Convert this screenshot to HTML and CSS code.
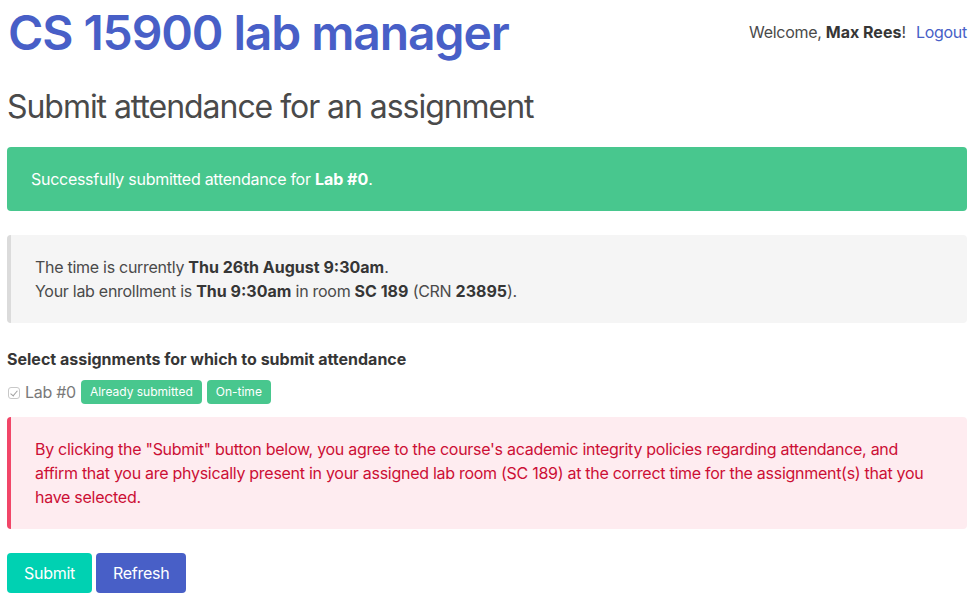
FILE: index.html
```html
<!DOCTYPE html>
<html lang="en">
  <head>
    <meta charset="UTF-8" />
    <meta name="viewport" content="width=device-width, initial-scale=1.0" />
    <title>CS 15900 lab manager</title>
    <link rel="stylesheet" href="styles.css">
  </head>
  <body>
    <div class="page">
      <header class="top">
        <h1 class="title"><a href="#">CS 15900 lab manager</a></h1>
        <div class="welcome">
          Welcome, <strong>Max Rees</strong>!
          <a href="#" class="logout">Logout</a>
        </div>
      </header>
      <h2 class="subtitle">Submit attendance for an assignment</h2>

      <div class="notification is-success">
        Successfully submitted attendance for <strong>Lab #0</strong>.
      </div>

      <div class="message">
        <div class="message-body">
          The time is currently <strong>Thu 26th August 9:30am</strong>.<br />
          Your lab enrollment is <strong>Thu 9:30am</strong> in room
          <strong>SC 189</strong> (CRN <strong>23895</strong>).
        </div>
      </div>

      <form action="#" method="post">
        <div class="field">
          <label class="label">Select assignments for which to submit attendance</label>
          <div class="assignment">
            <label class="checkbox" disabled>
              <input type="checkbox" checked disabled />
              Lab #0
            </label>
            <span class="tag">Already submitted</span>
            <span class="tag">On-time</span>
          </div>
        </div>

        <div class="message is-danger">
          <div class="message-body">
            By clicking the "Submit" button below, you agree to the course's
            academic integrity policies regarding attendance, and affirm that
            you are physically present in your assigned lab room (SC 189) at
            the correct time for the assignment(s) that you have selected.
          </div>
        </div>

        <div class="buttons">
          <button type="submit" class="button is-primary">Submit</button>
          <button type="button" class="button is-link">Refresh</button>
        </div>
      </form>
    </div>
  </body>
</html>
```

FILE: styles.css
```css
body {
  margin: 0;
  font-family: 'Inter', 'Liberation Sans', sans-serif;
  font-size: 16px;
  line-height: 1.5;
  letter-spacing: -0.28px;
  color: #4a4a4a;
  background: #fff;
}
.page {
  padding: 6px 10px 0 7px;
}
a {
  color: #485fc7;
  text-decoration: none;
}
strong {
  color: #363636;
  font-weight: 700;
  letter-spacing: 0;
}
/* header */
.top {
  display: flex;
  justify-content: space-between;
  align-items: flex-start;
}
.title {
  margin: 0;
  padding-left: 1px;
  font-size: 48px;
  font-weight: 600;
  line-height: 1.125;
  letter-spacing: -1.1px;
}
.welcome {
  padding-top: 14px;
  font-size: 16px;
}
.logout {
  margin-left: 6px;
}
.subtitle {
  margin: 27px 0 20px;
  font-size: 32px;
  font-weight: 400;
  line-height: 1.25;
  letter-spacing: -1.05px;
  color: #4a4a4a;
}
/* notification */
.notification {
  padding: 20px 40px 20px 24px;
  margin-bottom: 24px;
  border-radius: 4px;
}
.notification.is-success {
  background-color: #48c78e;
  color: #fff;
}
.notification.is-success strong {
  color: #fff;
}
/* message */
.message {
  margin-bottom: 24px;
  border-radius: 4px;
  background-color: #f5f5f5;
}
.message-body {
  padding: 20px 24px;
  border-left: 4px solid #dbdbdb;
  border-radius: 4px;
  color: #4a4a4a;
}
.message.is-danger {
  background-color: #feecf0;
}
.message.is-danger .message-body {
  border-color: #f14668;
  color: #cc0f35;
}
/* form */
.field {
  margin-bottom: 13px;
}
.label {
  display: block;
  margin-bottom: 9px;
  font-weight: 700;
  letter-spacing: 0;
  color: #363636;
}
.assignment {
  display: flex;
  align-items: center;
  gap: 5px;
}
.checkbox {
  display: inline-flex;
  align-items: center;
  gap: 5px;
  color: #7a7a7a;
  cursor: not-allowed;
}
.checkbox input {
  appearance: none;
  position: relative;
  margin: 1px 0 0 1px;
  width: 12px;
  height: 12px;
  border: 1px solid #c8c8c8;
  border-radius: 3px;
  background: #fff;
}
.checkbox input:checked::before {
  content: '';
  position: absolute;
  left: 3px;
  top: 1px;
  width: 3px;
  height: 6px;
  border: solid #a0a0a0;
  border-width: 0 1.5px 1.5px 0;
  transform: rotate(40deg);
}
.tag {
  display: inline-flex;
  align-items: center;
  height: 24px;
  padding: 0 9px;
  font-size: 12px;
  letter-spacing: 0;
  border-radius: 4px;
  background-color: #48c78e;
  color: #fff;
}
.buttons {
  display: flex;
  gap: 4px;
  margin-top: 24px;
}
.button {
  height: 40px;
  padding: 7px 16px;
  font-family: inherit;
  font-size: 16px;
  line-height: 1.5;
  letter-spacing: -0.28px;
  border: 1px solid transparent;
  border-radius: 4px;
  color: #fff;
  cursor: pointer;
}
.button.is-primary {
  background-color: #00d1b2;
}
.button.is-link {
  background-color: #485fc7;
}
```
